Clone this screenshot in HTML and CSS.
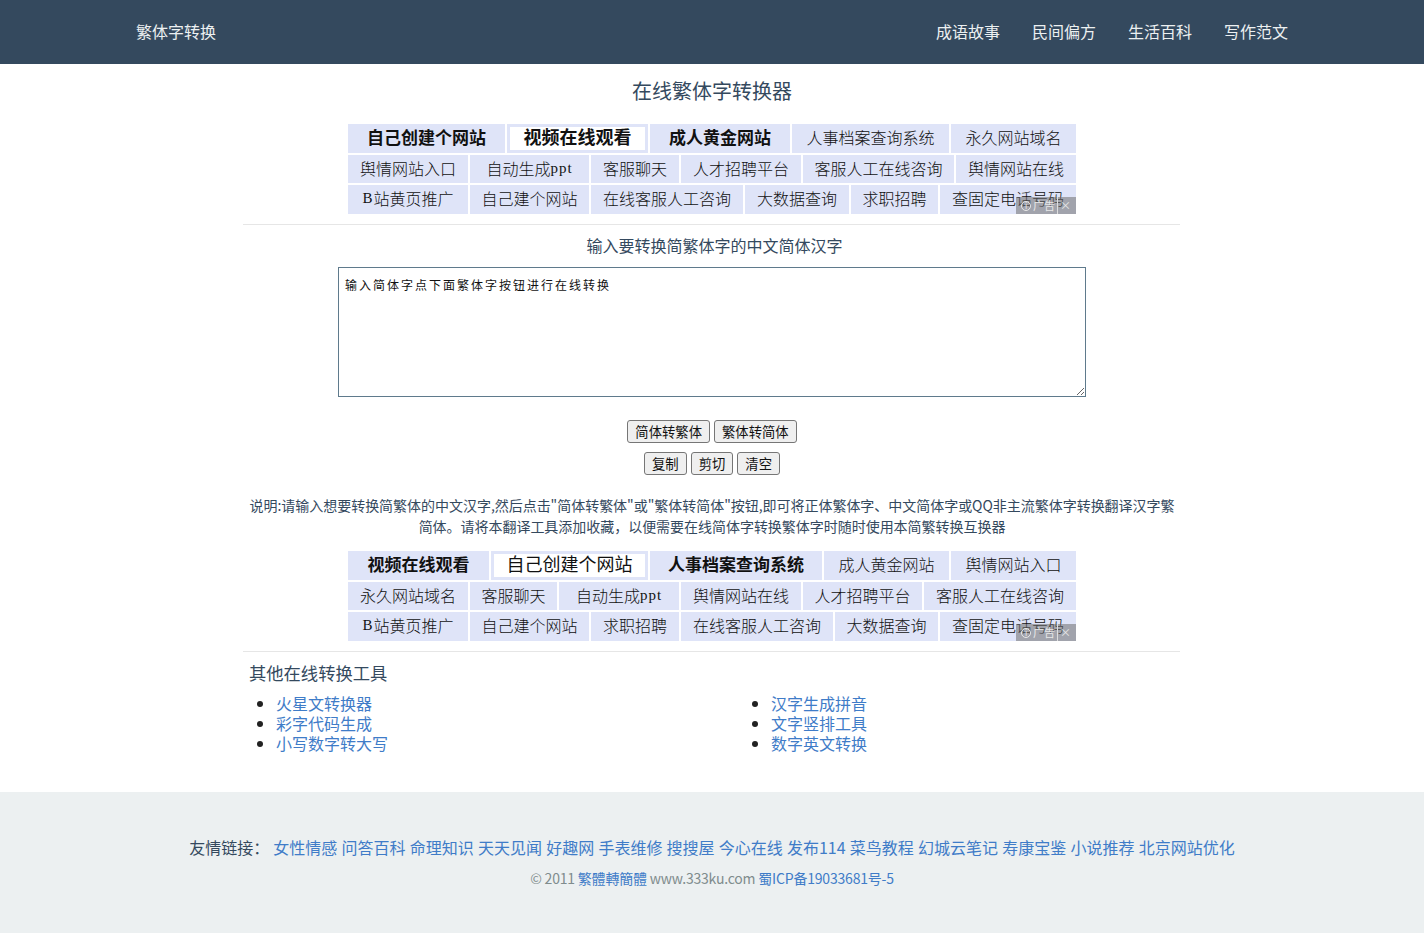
FILE: index.html
```html
<!DOCTYPE html>
<html lang="zh-CN">
<head>
<meta charset="utf-8">
<title>在线繁体字转换器</title>
<link rel="stylesheet" href="styles.css">
</head>
<body>
<header class="topbar">
  <div class="topbar-inner">
    <a class="brand" href="#">繁体字转换</a>
    <nav class="nav">
      <a href="#">成语故事</a>
      <a href="#">民间偏方</a>
      <a href="#">生活百科</a>
      <a href="#">写作范文</a>
    </nav>
  </div>
</header>
<main class="content">
  <h1 class="title">在线繁体字转换器</h1>
  <div class="ads">
    <div class="ad-row r1">
      <a class="b17" href="#">自己创建个网站</a><a class="sel b18" href="#">视频在线观看</a><a class="b17" href="#">成人黄金网站</a><a href="#">人事档案查询系统</a><a href="#">永久网站域名</a>
    </div>
    <div class="ad-row r2 mid">
      <a href="#">舆情网站入口</a><a href="#">自动生成<span class="hw">ppt</span></a><a href="#">客服聊天</a><a href="#">人才招聘平台</a><a href="#">客服人工在线咨询</a><a href="#">舆情网站在线</a>
    </div>
    <div class="ad-row r3">
      <a href="#"><span class="hw">B</span>站黄页推广</a><a href="#">自己建个网站</a><a href="#">在线客服人工咨询</a><a href="#">大数据查询</a><a href="#">求职招聘</a><a href="#">查固定电话号码</a>
    </div>
    <div class="ad-badge"><span class="ad-i">i</span><span>广告</span><span class="ad-x">×</span></div>
  </div>
  <hr class="rule">
  <h2 class="label">输入要转换简繁体字的中文简体汉字</h2>
  <textarea class="input" spellcheck="false">输入简体字点下面繁体字按钮进行在线转换</textarea>
  <div class="btn-row first">
    <button type="button">简体转繁体</button><button type="button">繁体转简体</button>
  </div>
  <div class="btn-row">
    <button type="button">复制</button><button type="button">剪切</button><button type="button">清空</button>
  </div>
  <p class="desc">说明:请输入想要转换简繁体的中文汉字,然后点击"简体转繁体"或"繁体转简体"按钮,即可将正体繁体字、中文简体字或QQ非主流繁体字转换翻译汉字繁<br>简体。请将本翻译工具添加收藏，以便需要在线简体字转换繁体字时随时使用本简繁转换互换器</p>
  <div class="ads">
    <div class="ad-row r4">
      <a class="b17" href="#">视频在线观看</a><a class="sel b17n" href="#">自己创建个网站</a><a class="b17" href="#">人事档案查询系统</a><a href="#">成人黄金网站</a><a href="#">舆情网站入口</a>
    </div>
    <div class="ad-row r5 mid">
      <a href="#">永久网站域名</a><a href="#">客服聊天</a><a href="#">自动生成<span class="hw">ppt</span></a><a href="#">舆情网站在线</a><a href="#">人才招聘平台</a><a href="#">客服人工在线咨询</a>
    </div>
    <div class="ad-row r6">
      <a href="#"><span class="hw">B</span>站黄页推广</a><a href="#">自己建个网站</a><a href="#">求职招聘</a><a href="#">在线客服人工咨询</a><a href="#">大数据查询</a><a href="#">查固定电话号码</a>
    </div>
    <div class="ad-badge"><span class="ad-i">i</span><span>广告</span><span class="ad-x">×</span></div>
  </div>
  <hr class="rule">
  <h3 class="tools-title">其他在线转换工具</h3>
  <div class="tools">
    <ul>
      <li><a href="#">火星文转换器</a></li>
      <li><a href="#">彩字代码生成</a></li>
      <li><a href="#">小写数字转大写</a></li>
    </ul>
    <ul>
      <li><a href="#">汉字生成拼音</a></li>
      <li><a href="#">文字竖排工具</a></li>
      <li><a href="#">数字英文转换</a></li>
    </ul>
  </div>
</main>
<footer class="footer">
  <p class="links"><span class="links-label">友情链接：</span><a href="#">女性情感</a> <a href="#">问答百科</a> <a href="#">命理知识</a> <a href="#">天天见闻</a> <a href="#">好趣网</a> <a href="#">手表维修</a> <a href="#">搜搜屋</a> <a href="#">今心在线</a> <a href="#">发布114</a> <a href="#">菜鸟教程</a> <a href="#">幻城云笔记</a> <a href="#">寿康宝鉴</a> <a href="#">小说推荐</a> <a href="#">北京网站优化</a></p>
  <p class="copy">© 2011 <a href="#">繁體轉簡體</a> www.333ku.com <a href="#">蜀ICP备19033681号-5</a></p>
</footer>
</body>
</html>
```
FILE: styles.css
```css
* { box-sizing: border-box; }
html, body { margin: 0; padding: 0; }
body {
  font-family: "Noto Sans CJK SC", "Noto Sans", sans-serif;
  font-size: 16px;
  color: #34495e;
  background: #fff;
}
a { text-decoration: none; }

.topbar { height: 64px; background: #34495e; }
.topbar-inner {
  width: 1152px;
  height: 64px;
  margin: 0 auto;
  padding-bottom: 2px;
  display: flex;
  align-items: center;
  justify-content: space-between;
}
.brand, .nav a { color: #ecf0f1; font-size: 16px; line-height: 24px; }
.nav { display: flex; gap: 32px; }

.content { width: 938px; margin: 0 0 0 243px; height: 728px; }
.title {
  margin: 0;
  height: 60px;
  padding-top: 12px;
  font-size: 20px;
  line-height: 30px;
  font-weight: 400;
  text-align: center;
}

.ads {
  position: relative;
  width: 728px;
  margin: 0 auto;
  display: flex;
  flex-direction: column;
  gap: 2px;
}
.ad-row { display: grid; gap: 2px; height: 29px; }
.ad-row.mid { height: 28px; }
.r1 { grid-template-columns: 157px 141px 140px 157px 125px; }
.r2 { grid-template-columns: 120px 119px 88px 120px 151px 120px; }
.r3 { grid-template-columns: 120px 119px 152px 104px 87px 136px; }
.r4 { grid-template-columns: 141px 157px 172px 125px 125px; }
.r5 { grid-template-columns: 120px 87px 120px 120px 119px 152px; }
.r6 { grid-template-columns: 120px 119px 88px 152px 103px 136px; }
.ad-row a {
  display: flex;
  align-items: center;
  justify-content: center;
  padding-bottom: 3px;
  background: #dfe4f8;
  color: #111;
  font-size: 16px;
  line-height: 16px;
  font-weight: 300;
  white-space: nowrap;
}
.r1 a, .r4 a { padding-bottom: 3px; }
.r2 a, .r5 a { padding-bottom: 2px; }
.ad-row a.b17 { font-size: 17px; font-weight: 700; }
.ad-row a.b18 { font-size: 18px; font-weight: 700; }
.ad-row a.b17n { font-size: 18px; font-weight: 400; }
.ad-row a.sel { background: #fff; border: 3px solid #dfe4f8; padding-bottom: 5px; }
.hw { font-family: "Liberation Serif", serif; font-size: 15px; letter-spacing: 1px; }

.ad-badge {
  position: absolute;
  right: 0;
  bottom: 0;
  width: 60px;
  height: 17px;
  display: flex;
  align-items: center;
  justify-content: center;
  gap: 2px;
  background: rgba(110, 110, 110, 0.55);
  color: #e8e8e8;
  font-size: 11px;
  line-height: 17px;
}
.ad-i {
  width: 10px;
  height: 10px;
  border: 1px solid #e8e8e8;
  border-radius: 50%;
  font-size: 8px;
  line-height: 8px;
  text-align: center;
}
.ad-x { border-left: 1px solid #ddd; padding-left: 2px; }

.rule { margin: 10px 1px 0 0; border: 0; border-top: 1px solid #e6e6e6; height: 1px; }

.label {
  margin: 0;
  height: 42px;
  padding: 8px 0 0 5px;
  font-size: 16px;
  line-height: 24px;
  font-weight: 400;
  text-align: center;
}
.input {
  display: block;
  width: 748px;
  height: 130px;
  margin: 0 auto;
  padding: 8px 6px;
  border: 1px solid #5f7a8c;
  border-radius: 0;
  outline: 0;
  color: #111;
  font-family: "Noto Sans CJK SC", sans-serif;
  font-size: 12px;
  letter-spacing: 2px;
  line-height: 18px;
}

.btn-row { display: flex; justify-content: center; gap: 4px; margin-top: 9px; height: 23px; }
.btn-row.first { margin-top: 23px; }
button {
  height: 23px;
  padding: 0 7px;
  border: 1px solid #767676;
  border-radius: 3px;
  background: #efefef;
  color: #111;
  font-family: "Noto Sans CJK SC", sans-serif;
  font-size: 13.33px;
  line-height: 19px;
}

.desc {
  margin: 20px 0 14px;
  font-size: 14px;
  line-height: 21px;
  letter-spacing: -0.03px;
  text-align: center;
  white-space: nowrap;
}

.tools-title {
  margin: 0;
  height: 41px;
  padding: 9px 0 0 6px;
  font-size: 17.3px;
  line-height: 24px;
  font-weight: 400;
}
.tools { display: grid; grid-template-columns: 495px 1fr; }
.tools ul { margin: 0; padding: 0 0 0 33px; }
.tools li { line-height: 20px; height: 20px; color: #222; }
.tools a, .footer a { color: #3f7cc8; }

.footer {
  height: 141px;
  background: #ecf0f1;
  text-align: center;
  padding-top: 42px;
}
.footer p { margin: 0; white-space: nowrap; }
.links { font-size: 16px; line-height: 26px; word-spacing: 0.6px; }
.links-label { margin-right: 4px; }
.copy { margin-top: 7px !important; font-size: 14px; line-height: 22px; color: #7f8c8d; letter-spacing: -0.2px; }
```
